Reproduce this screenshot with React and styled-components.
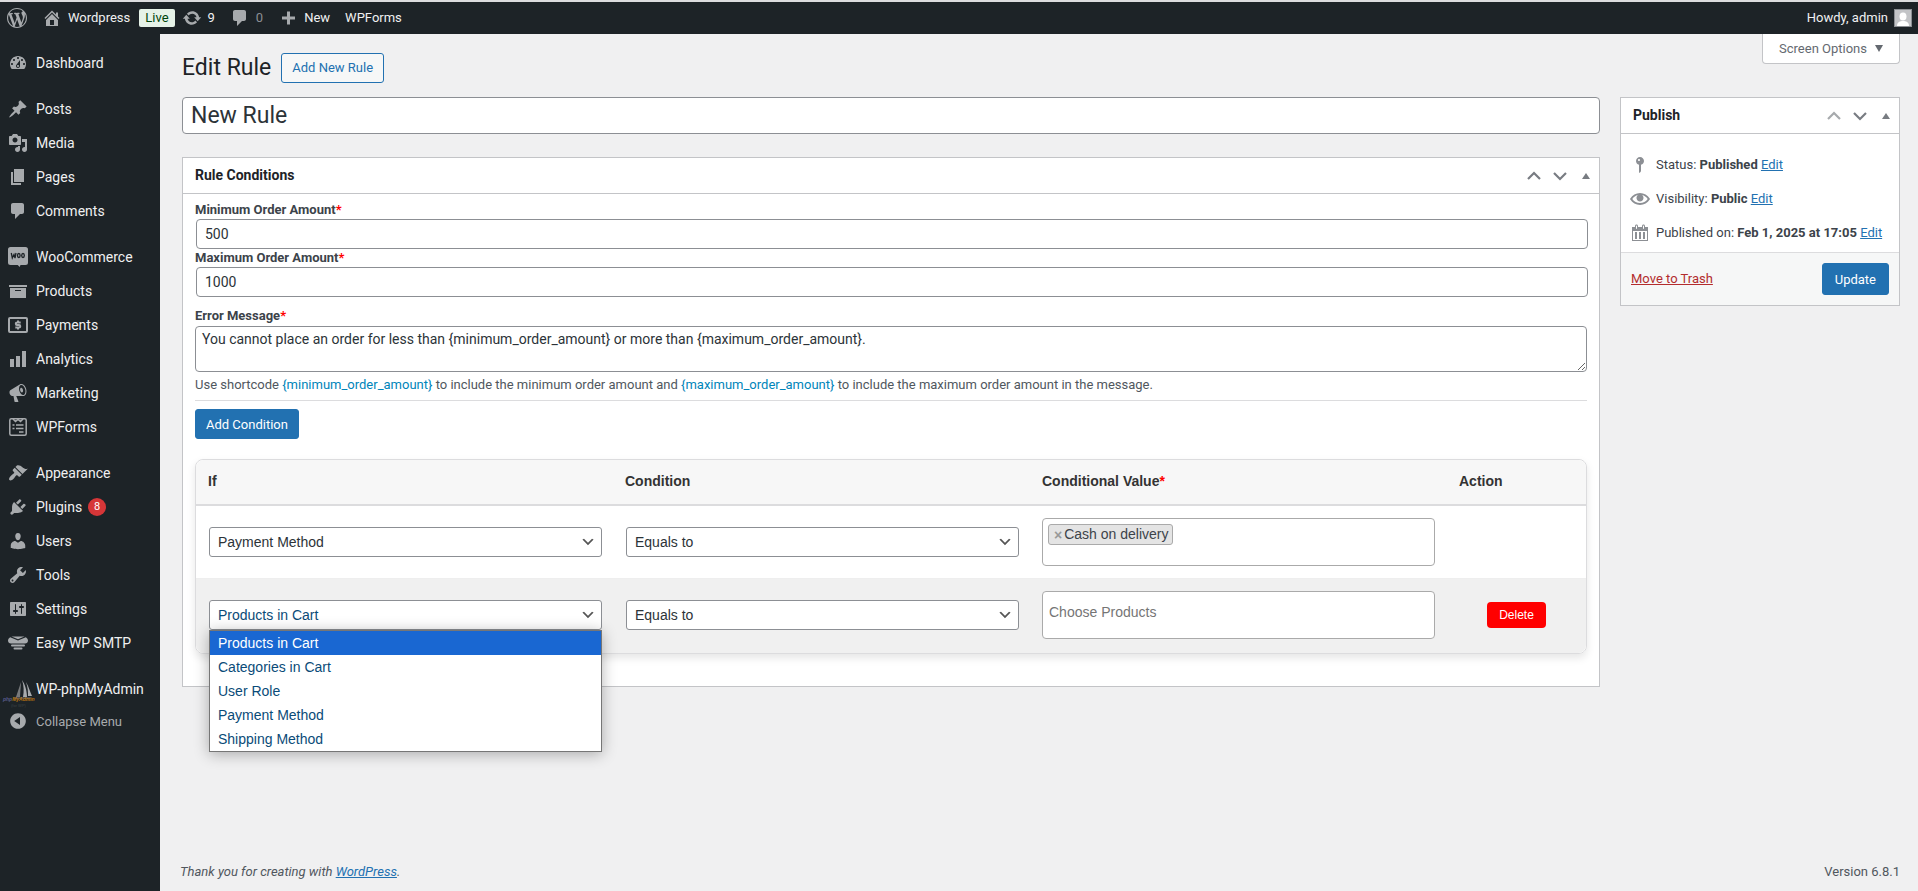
import React, { useState } from "react";
import styled, { createGlobalStyle } from "styled-components";

const icons = {
  wordpress:
    "M20 10c0-5.51-4.49-10-10-10C4.48 0 0 4.49 0 10c0 5.52 4.48 10 10 10 5.51 0 10-4.48 10-10zM7.78 15.37L4.37 6.22c.55-.02 1.17-.08 1.17-.08.5-.06.44-1.13-.06-1.11 0 0-1.45.11-2.37.11-.18 0-.37 0-.58-.01C4.12 2.69 6.87 1.11 10 1.11c2.33 0 4.45.87 6.05 2.34-.68-.11-1.65.39-1.65 1.58 0 .74.45 1.36.9 2.1.35.61.55 1.36.55 2.46 0 1.49-1.4 5-1.4 5l-3.03-8.37c.54-.02.82-.17.82-.17.5-.05.44-1.25-.06-1.22 0 0-1.44.12-2.38.12-.87 0-2.33-.12-2.33-.12-.5-.03-.56 1.2-.06 1.22l.92.08 1.26 3.41zM17.41 10c.24-.64.74-1.87.43-4.25.7 1.29 1.05 2.71 1.05 4.25 0 3.29-1.73 6.24-4.4 7.78.97-2.59 1.94-5.2 2.92-7.78zM6.1 18.09C3.12 16.65 1.11 13.53 1.11 10c0-1.3.23-2.48.72-3.59C3.25 10.3 4.67 14.2 6.1 18.09zm4.03-6.63l2.58 6.98c-.86.29-1.76.45-2.71.45-.79 0-1.57-.11-2.29-.33.81-2.38 1.62-4.74 2.42-7.1z",
  home: "M16 8.5l1.53 1.53-1.06 1.06L10 4.6l-6.47 6.49-1.06-1.06L10 2.5l4 4v-2h2v4zm-6-2.46l6 5.99V18H4v-5.97zM12 17v-5H8v5h4z",
  update:
    "M10.2 3.28c3.53 0 6.43 2.61 6.92 6h2.08l-3.5 4-3.5-4h2.32c-.45-1.97-2.21-3.45-4.32-3.45-1.45 0-2.73.71-3.54 1.78L4.95 5.66C6.23 4.2 8.11 3.28 10.2 3.28zm-.4 13.44c-3.52 0-6.43-2.61-6.92-6H.8l3.5-4c1.17 1.33 2.33 2.67 3.5 4H5.48c.45 1.97 2.21 3.45 4.32 3.45 1.45 0 2.73-.71 3.54-1.78l1.71 1.95c-1.28 1.46-3.15 2.38-5.25 2.38z",
  comments:
    "M5 2h9c1.1 0 2 .9 2 2v7c0 1.1-.9 2-2 2h-2l-5 5v-5H5c-1.1 0-2-.9-2-2V4c0-1.1.9-2 2-2z",
  plus: "M17 8.5v3h-5v5H9v-5H4v-3h5v-5h3v5h5z",
  dashboard:
    "M3.76 16h12.48c1.1-1.37 1.76-3.11 1.76-5 0-4.42-3.58-8-8-8s-8 3.58-8 8c0 1.89.66 3.63 1.76 5zM10 4c.55 0 1 .45 1 1s-.45 1-1 1-1-.45-1-1 .45-1 1-1zM6 6c.55 0 1 .45 1 1s-.45 1-1 1-1-.45-1-1 .45-1 1-1zm8 0c.55 0 1 .45 1 1s-.45 1-1 1-1-.45-1-1 .45-1 1-1zm-5.37 5.55L12 7v6c0 1.1-.9 2-2 2s-2-.9-2-2c0-.57.24-1.08.63-1.45zM4 10c.55 0 1 .45 1 1s-.45 1-1 1-1-.45-1-1 .45-1 1-1zm12 0c.55 0 1 .45 1 1s-.45 1-1 1-1-.45-1-1 .45-1 1-1zm-5 3c0-.55-.45-1-1-1s-1 .45-1 1 .45 1 1 1 1-.45 1-1z",
  posts:
    "M10.44 3.02l1.82-1.82 6.36 6.35-1.83 1.82c-1.05-.68-2.48-.57-3.41.36l-.75.75c-.92.93-1.04 2.35-.35 3.41l-1.83 1.82-2.41-2.41-2.8 2.79c-.42.42-3.38 2.71-3.8 2.29s1.86-3.39 2.28-3.81l2.79-2.79L4.1 9.36l1.83-1.82c1.05.69 2.48.57 3.4-.36l.75-.75c.93-.92 1.05-2.35.36-3.41z",
  media:
    "M13 11V4c0-.55-.45-1-1-1h-1.67L9 1H5L3.67 3H2c-.55 0-1 .45-1 1v7c0 .55.45 1 1 1h10c.55 0 1-.45 1-1zM7 4.5c1.38 0 2.5 1.12 2.5 2.5S8.38 9.5 7 9.5 4.5 8.38 4.5 7 5.62 4.5 7 4.5zM14 6h5v10.5c0 1.38-1.12 2.5-2.5 2.5S14 17.88 14 16.5s1.12-2.5 2.5-2.5c.17 0 .34.02.5.05V9h-3V6zm-4 8.05V13h2v3.5c0 1.38-1.12 2.5-2.5 2.5S7 17.88 7 16.5 8.12 14 9.5 14c.17 0 .34.02.5.05z",
  pages: "M6 15V2h10v13H6zm-1 1h8v2H3V5h2v11z",
  products: "M19 4v2H1V4h18zM2 7h16v10H2V7zm11 3V9H7v1h6z",
  analytics: "M18 18V2h-4v16h4zm-6 0V7H8v11h4zm-6 0v-8H2v8h4z",
  marketing:
    "M18.15 5.94c.46 1.62.38 3.22-.02 4.48-.42 1.28-1.26 2.18-2.3 2.48-.16.06-.26.06-.4.06-.06.02-.12.02-.18.02-.06.02-.14.02-.22.02h-6.8l2.22 5.5c.02.14-.06.26-.14.34-.08.1-.24.16-.34.16H6.95c-.1 0-.26-.06-.34-.16-.08-.08-.16-.2-.14-.34l-1-5.5H4.25l-.02-.02c-.5.06-1.08-.18-1.54-.62s-.88-1.08-1.06-1.88c-.24-.8-.2-1.56-.02-2.2.18-.62.58-1.08 1.06-1.3l.02-.02 9-5.4c.1-.06.18-.1.24-.16.06-.04.14-.08.24-.12.16-.08.28-.12.5-.18 1.04-.3 2.24.1 3.22.98s1.84 2.24 2.26 3.86zm-2.58 5.98h-.02c.4-.1.74-.34 1.04-.7.58-.7.86-1.76.86-3.04 0-.64-.1-1.3-.28-1.98-.34-1.36-1.02-2.5-1.78-3.24s-1.68-1.1-2.46-.88c-.82.22-1.4.96-1.7 2-.32 1.04-.28 2.36.06 3.72.38 1.36 1 2.5 1.8 3.24.78.74 1.62 1.1 2.48.88zm-2.54-7.08c.22-.04.42-.02.62.04.38.16.76.48 1.02 1s.42 1.2.42 1.78c0 .3-.04.56-.12.8-.18.48-.44.84-.86.94-.34.1-.8-.06-1.14-.4s-.64-.86-.78-1.5c-.18-.62-.12-1.24.02-1.72s.48-.84.82-.94z",
  appearance:
    "M14.48 11.06L7.41 3.99l1.5-1.5c.5-.56 2.3-.47 3.51.32 1.21.8 1.43 1.28 2.91 2.1 1.18.64 2.45 1.26 4.45.85zm-.71.71L6.7 4.7 4.93 6.47c-.39.39-.39 1.02 0 1.41l1.06 1.06c.39.39.39 1.03 0 1.42-.6.6-1.43 1.11-2.21 1.69-.35.26-.7.53-1.01.84C1.43 14.23.4 16.08 1.4 17.07c.99 1 2.84-.03 4.18-1.36.31-.31.58-.66.85-1.02.57-.78 1.08-1.61 1.69-2.21.39-.39 1.02-.39 1.41 0l1.06 1.06c.39.39 1.02.39 1.41 0z",
  plugins:
    "M13.11 4.36L9.87 7.6 8 5.73l3.24-3.24c.35-.34 1.05-.2 1.56.32.52.51.66 1.21.31 1.55zm-8 1.77l.91-1.12 9.01 9.01-1.19.84c-.71.71-2.63 1.16-3.82 1.16H6.14L4.9 17.26c-.59.59-1.54.59-2.12 0-.59-.58-.59-1.53 0-2.12l1.24-1.24v-3.88c0-1.13.4-3.19 1.09-3.89zm7.26 3.97l3.24-3.24c.34-.35 1.04-.21 1.55.31.52.51.66 1.21.31 1.55l-3.24 3.25z",
  users:
    "M10 9.25c-2.27 0-2.73-3.44-2.73-3.44C7 4.02 7.82 2 9.97 2c2.16 0 2.98 2.02 2.71 3.81 0 0-.41 3.44-2.68 3.44zm0 2.57L12.72 10c2.39 0 4.52 2.33 4.52 4.53v2.49s-3.65 1.13-7.24 1.13c-3.65 0-7.24-1.13-7.24-1.13v-2.49c0-2.25 1.94-4.48 4.47-4.48z",
  tools:
    "M16.68 9.77c-1.34 1.34-3.3 1.67-4.95.99l-5.41 6.52c-.99.99-2.59.99-3.58 0s-.99-2.59 0-3.57l6.52-5.42c-.68-1.65-.35-3.61.99-4.95 1.28-1.28 3.12-1.62 4.72-1.06l-2.89 2.89 2.82 2.82 2.86-2.87c.53 1.58.18 3.39-1.08 4.65zM3.81 16.21c.4.39 1.04.39 1.43 0 .4-.4.4-1.04 0-1.43-.39-.4-1.03-.4-1.43 0-.39.39-.39 1.03 0 1.43z",
  settings:
    "M18 16V4c0-.6-.4-1-1-1H3c-.6 0-1 .4-1 1v12c0 .6.4 1 1 1h14c.6 0 1-.4 1-1zM8 11h1c.55 0 1 .45 1 1s-.45 1-1 1H8v1.5c0 .28-.22.5-.5.5s-.5-.22-.5-.5V13H6c-.55 0-1-.45-1-1s.45-1 1-1h1V5.5c0-.28.22-.5.5-.5s.5.22.5.5V11zm5-2h-1c-.55 0-1-.45-1-1s.45-1 1-1h1V5.500c0-.28.22-.5.5-.5s.5.22.5.5V7h1c.55 0 1 .45 1 1s-.45 1-1 1h-1v5.500c0 .28-.22.5-.5.5s-.5-.22-.5-.5V9z",
  collapse:
    "M10 2.16c4.33 0 7.84 3.51 7.84 7.84s-3.51 7.84-7.84 7.84S2.16 14.33 2.16 10 5.71 2.16 10 2.16zm2 11.72V6.12L6.18 9.97z",
  visibility:
    "M19.7 9.4C17.7 6 14 3.9 10 3.9S2.3 6 .3 9.4L0 10l.3.6c2 3.4 5.7 5.5 9.7 5.5s7.7-2.1 9.7-5.5l.3-.6-.3-.6zM10 14.1c-3.1 0-6-1.6-7.7-4.1C3.6 8 5.7 6.6 8 6.1c-.9.6-1.5 1.7-1.5 2.9 0 1.9 1.6 3.5 3.5 3.5s3.5-1.6 3.5-3.5c0-1.2-.6-2.3-1.5-2.9 2.3.5 4.4 1.9 5.7 3.9-1.7 2.5-4.6 4.1-7.7 4.1z",
  status:
    "M14 6c0 1.86-1.28 3.41-3 3.86V16c0 1-2 2-2 2V9.86c-1.72-.45-3-2-3-3.86 0-2.21 1.79-4 4-4s4 1.79 4 4zM8 5c0 .55.45 1 1 1s1-.45 1-1-.45-1-1-1-1 .45-1 1z",
  calendar:
    "M15 4h3v14H2V4h3V3c0-.83.67-1.5 1.5-1.5S8 2.17 8 3v1h4V3c0-.83.67-1.5 1.5-1.5S15 2.17 15 3v1zM6 3v2.5c0 .28.22.5.5.5s.5-.22.5-.5V3c0-.28-.22-.5-.5-.5S6 2.72 6 3zm7 0v2.5c0 .28.22.5.5.5s.5-.22.5-.5V3c0-.28-.22-.5-.5-.5s-.5.22-.5.5zm4 14V8H3v9h14zM7 16V9H5v7h2zm4 0V9H9v7h2zm4 0V9h-2v7h2z",
};

function Icon({ name, size = 20 }) {
  return (
    <svg width={size} height={size} viewBox="0 0 20 20" fill="currentColor" fillRule="evenodd" aria-hidden="true">
      <path d={icons[name]} />
    </svg>
  );
}

const WooIcon = () => (
  <svg width="20" height="20" viewBox="0 0 20 20" aria-hidden="true">
    <path fill="currentColor" d="M2.5 0h15A2.5 2.5 0 0 1 20 2.500v13a2.500 2.500 0 0 1-2.500 2.500h-5l-.8 2-2-2H2.500A2.500 2.500 0 0 1 0 15.500v-13A2.500 2.500 0 0 1 2.500 0z" />
    <g fill="none" stroke="#1d2327" strokeWidth="1.300">
      <path d="M3.300 6l1 5L6 7.500l1 3.500L8 6" />
      <ellipse cx="10.800" cy="8.500" rx="1.300" ry="2" />
      <ellipse cx="15" cy="8.500" rx="1.300" ry="2" />
    </g>
  </svg>
);

const PaymentsIcon = () => (
  <svg width="20" height="20" viewBox="0 0 20 20" fill="none" stroke="currentColor" strokeWidth="2" aria-hidden="true">
    <rect x="1" y="3" width="18" height="14" rx="1" />
    <path d="M12.700 7.500H9c-1.600 0-1.600 2.500 0 2.500h2c1.700 0 1.700 2.500 0 2.500H7.300M10 5.500v2M10 12.500v2" />
  </svg>
);

const WPFormsIcon = () => (
  <svg width="20" height="20" viewBox="0 0 20 20" fill="none" stroke="currentColor" strokeWidth="1.500" aria-hidden="true">
    <rect x="1.800" y="1.800" width="16.400" height="16.400" rx="1.500" />
    <path d="M5 2l2.500 2.500L10 2.500l2.500 2L15 2M4.500 8h2M8 8h7.500M4.500 11.500h2M8 11.500h7.500M11 15h4.500" />
  </svg>
);

const SmtpIcon = () => (
  <svg width="20" height="20" viewBox="0 0 20 20" fill="currentColor" aria-hidden="true">
    <path d="M3.500 3.500h13L10 6.200z" />
    <path d="M2.200 4.200L10 7.600l7.800-3.400C19.200 5 20 6.300 20 7.500c0 1.700-1.300 3-3 3H3c-1.700 0-3-1.300-3-3 0-1.200.8-2.500 2.200-3.300z" />
    <rect x="3" y="11.500" width="14" height="2" rx="1" />
    <rect x="5.500" y="14.500" width="9" height="2" rx="1" />
  </svg>
);

// the plugin's own logo fills the whole icon column
const PhpMyAdminIcon = () => (
  <svg width="36" height="42" viewBox="0 0 36 42" aria-hidden="true">
    <path fill="#77797b" d="M21 14l-5 15h4z" />
    <path fill="#a7aaad" d="M22 12c2 6 2 11 1 17h4c0-6-2-13-5-17zM26 14c3 5 4 10 6 14h-4c0-4 0-8-2-14z" />
    <path stroke="#77797b" d="M14 30h17" />
    <g fontFamily="Liberation Sans">
      <text x="3" y="33" fontStyle="italic" fontWeight="bold" fontSize="5">
        <tspan fill="#595b8c">php</tspan>
        <tspan fill="#b87412">MyAdmin</tspan>
      </text>
      <text x="11" y="39" fontSize="4" fill="#3c4146">
        (for WP)
      </text>
    </g>
  </svg>
);

const menu = [
  [{ label: "Dashboard", icon: <Icon name="dashboard" /> }],
  [
    { label: "Posts", icon: <Icon name="posts" /> },
    { label: "Media", icon: <Icon name="media" /> },
    { label: "Pages", icon: <Icon name="pages" /> },
    { label: "Comments", icon: <Icon name="comments" /> },
  ],
  [
    { label: "WooCommerce", icon: <WooIcon /> },
    { label: "Products", icon: <Icon name="products" /> },
    { label: "Payments", icon: <PaymentsIcon /> },
    { label: "Analytics", icon: <Icon name="analytics" /> },
    { label: "Marketing", icon: <Icon name="marketing" /> },
    { label: "WPForms", icon: <WPFormsIcon /> },
  ],
  [
    { label: "Appearance", icon: <Icon name="appearance" /> },
    { label: "Plugins", icon: <Icon name="plugins" />, count: 8 },
    { label: "Users", icon: <Icon name="users" /> },
    { label: "Tools", icon: <Icon name="tools" /> },
    { label: "Settings", icon: <Icon name="settings" /> },
    { label: "Easy WP SMTP", icon: <SmtpIcon /> },
  ],
  [{ label: "WP-phpMyAdmin", icon: <PhpMyAdminIcon /> }],
];

const ruleTypes = ["Products in Cart", "Categories in Cart", "User Role", "Payment Method", "Shipping Method"];

function BoxHandles({ name, first }) {
  return (
    <Handles>
      <HandleButton type="button" aria-label={`Move ${name} up`} $dim={first}>
        <svg width="14" height="10" viewBox="0 0 14 10" fill="none" stroke="currentColor" strokeWidth="2.200">
          <path d="M1 8l6-6 6 6" />
        </svg>
      </HandleButton>
      <HandleButton type="button" aria-label={`Move ${name} down`}>
        <svg width="14" height="10" viewBox="0 0 14 10" fill="none" stroke="currentColor" strokeWidth="2.200">
          <path d="M1 2l6 6 6-6" />
        </svg>
      </HandleButton>
      <HandleButton type="button" aria-label={`Toggle ${name}`}>
        <svg width="8" height="6" viewBox="0 0 8 6" fill="currentColor">
          <path d="M4 0l4 6H0z" />
        </svg>
      </HandleButton>
    </Handles>
  );
}

function App() {
  const [title, setTitle] = useState("New Rule");
  const [min, setMin] = useState("500");
  const [max, setMax] = useState("1000");
  const [message, setMessage] = useState(
    "You cannot place an order for less than {minimum_order_amount} or more than {maximum_order_amount}."
  );
  const [type, setType] = useState("Products in Cart");

  return (
    <>
      <GlobalStyle />
      <Page>
        <AdminBar>
          <BarLink href="#" aria-label="About WordPress">
            <Icon name="wordpress" />
          </BarLink>
          <BarLink href="#">
            <Icon name="home" />
            Wordpress
          </BarLink>
          <LiveBadge href="#">Live</LiveBadge>
          <BarLink href="#">
            <Icon name="update" />
            9
          </BarLink>
          <BarLink href="#" $muted>
            <Icon name="comments" />
            0
          </BarLink>
          <BarLink href="#">
            <Icon name="plus" />
            New
          </BarLink>
          <BarLink href="#">WPForms</BarLink>
          <Account href="#">
            Howdy, admin
            <Avatar>
              <svg width="16" height="16" viewBox="0 0 16 16" fill="#fff">
                <ellipse cx="8" cy="6.500" rx="3.500" ry="4" />
                <path d="M2 16c0-4 3-5 6-5s6 1 6 5z" />
              </svg>
            </Avatar>
          </Account>
        </AdminBar>

        <Columns>
          <Sidebar>
            {menu.map((group, i) => (
              <MenuGroup key={i}>
                {group.map((item) => (
                  <li key={item.label}>
                    <MenuLink href="#">
                      <MenuIcon>{item.icon}</MenuIcon>
                      {item.label}
                      {item.count && <Count>{item.count}</Count>}
                    </MenuLink>
                  </li>
                ))}
              </MenuGroup>
            ))}
            <Collapse type="button">
              <MenuIcon>
                <Icon name="collapse" />
              </MenuIcon>
              Collapse Menu
            </Collapse>
          </Sidebar>

          <Main>
            <TopRow>
              <Heading>
                <h1>Edit Rule</h1>
                <OutlineLink href="#">Add New Rule</OutlineLink>
              </Heading>
              <ScreenOptions type="button">
                Screen Options
                <svg width="8" height="7" viewBox="0 0 8 7" fill="currentColor">
                  <path d="M0 0h8L4 7z" />
                </svg>
              </ScreenOptions>
            </TopRow>

            <Content>
              <div>
                <TitleInput aria-label="Rule title" value={title} onChange={(e) => setTitle(e.target.value)} />
                <Box>
                  <BoxHeader>
                    <h2>Rule Conditions</h2>
                    <BoxHandles name="Rule Conditions" />
                  </BoxHeader>
                  <BoxBody>
                    <Label htmlFor="min">
                      Minimum Order Amount<Star>*</Star>
                    </Label>
                    <Input id="min" value={min} onChange={(e) => setMin(e.target.value)} />
                    <Label htmlFor="max">
                      Maximum Order Amount<Star>*</Star>
                    </Label>
                    <Input id="max" value={max} onChange={(e) => setMax(e.target.value)} />
                    <MessageField>
                      <Label htmlFor="message">
                        Error Message<Star>*</Star>
                      </Label>
                      <Textarea id="message" value={message} onChange={(e) => setMessage(e.target.value)} />
                      <Hint>
                        Use shortcode <code>{"{minimum_order_amount}"}</code> to include the minimum order amount and{" "}
                        <code>{"{maximum_order_amount}"}</code> to include the maximum order amount in the message.
                      </Hint>
                    </MessageField>
                    <PrimaryButton type="button">Add Condition</PrimaryButton>

                    <TableCard>
                      <Table>
                        <colgroup>
                          <col width="30%" />
                          <col width="30%" />
                          <col width="30%" />
                          <col width="10%" />
                        </colgroup>
                        <thead>
                          <tr>
                            <th>If</th>
                            <th>Condition</th>
                            <th>
                              Conditional Value<Star>*</Star>
                            </th>
                            <th>Action</th>
                          </tr>
                        </thead>
                        <tbody>
                          <tr>
                            <td>
                              <Select aria-label="If" defaultValue="Payment Method">
                                {ruleTypes.map((t) => (
                                  <option key={t}>{t}</option>
                                ))}
                              </Select>
                            </td>
                            <td>
                              <Select aria-label="Condition">
                                <option>Equals to</option>
                              </Select>
                            </td>
                            <td>
                              <TagBox>
                                <Tag>
                                  <button type="button" aria-label="Remove Cash on delivery">
                                    ×
                                  </button>
                                  Cash on delivery
                                </Tag>
                              </TagBox>
                            </td>
                            <td />
                          </tr>
                          <tr>
                            <td>
                              <Dropdown>
                                <Select aria-label="If" $active value={type} onChange={(e) => setType(e.target.value)}>
                                  {ruleTypes.map((t) => (
                                    <option key={t}>{t}</option>
                                  ))}
                                </Select>
                                <Options role="listbox">
                                  {ruleTypes.map((t) => (
                                    <Option
                                      key={t}
                                      role="option"
                                      aria-selected={t === type}
                                      $selected={t === type}
                                      onClick={() => setType(t)}
                                    >
                                      {t}
                                    </Option>
                                  ))}
                                </Options>
                              </Dropdown>
                            </td>
                            <td>
                              <Select aria-label="Condition">
                                <option>Equals to</option>
                              </Select>
                            </td>
                            <td>
                              <TagBox>
                                <TagInput aria-label="Products" placeholder="Choose Products" />
                              </TagBox>
                            </td>
                            <td>
                              <DeleteButton type="button">Delete</DeleteButton>
                            </td>
                          </tr>
                        </tbody>
                      </Table>
                    </TableCard>
                  </BoxBody>
                </Box>
              </div>

              <Box as="aside">
                <BoxHeader>
                  <h2>Publish</h2>
                  <BoxHandles name="Publish" first />
                </BoxHeader>
                <PublishInfo>
                  <li>
                    <Icon name="status" />
                    <span>
                      Status: <b>Published</b> <a href="#">Edit</a>
                    </span>
                  </li>
                  <li>
                    <Icon name="visibility" />
                    <span>
                      Visibility: <b>Public</b> <a href="#">Edit</a>
                    </span>
                  </li>
                  <li>
                    <Icon name="calendar" />
                    <span>
                      Published on: <b>Feb 1, 2025 at 17:05</b> <a href="#">Edit</a>
                    </span>
                  </li>
                </PublishInfo>
                <PublishActions>
                  <TrashLink href="#">Move to Trash</TrashLink>
                  <PrimaryButton type="button" $tall>
                    Update
                  </PrimaryButton>
                </PublishActions>
              </Box>
            </Content>

            <Footer>
              <em>
                Thank you for creating with <a href="#">WordPress</a>.
              </em>
              <span>Version 6.8.1</span>
            </Footer>
          </Main>
        </Columns>
      </Page>
    </>
  );
}

const GlobalStyle = createGlobalStyle`
  * {
    box-sizing: border-box;
  }
  body {
    margin: 0;
    background: #f0f0f1;
    color: #3c434a;
    font-family: Roboto, "Open Sans", sans-serif;
    font-size: 13px;
    line-height: 18px;
  }
  button, input, textarea {
    font-family: inherit;
  }
  a {
    color: #2271b1;
  }
  h1, h2, ul {
    margin: 0;
    padding: 0;
  }
  ul {
    list-style: none;
  }
  svg {
    flex: none;
  }
`;

const Page = styled.div`
  display: flex;
  flex-direction: column;
  min-height: 100vh;
  border-top: 2px solid #dcdcde;
`;

const AdminBar = styled.header`
  display: flex;
  align-items: center;
  height: 32px;
  padding: 0 6px 0 7px;
  background: #1d2327;
`;

const BarLink = styled.a`
  display: flex;
  align-items: center;
  gap: 6px;
  margin-right: 15px;
  color: ${(p) => (p.$muted ? "#8c8f94" : "#f0f0f1")};
  text-decoration: none;
  svg {
    color: #a7aaad;
  }
`;

const LiveBadge = styled.a`
  margin: 0 7px 0 -6px;
  padding: 0 6px;
  border-radius: 2px;
  background: #e6f2e8;
  color: #00450c;
  font-size: 13px;
  text-decoration: none;
`;

const Account = styled(BarLink)`
  margin: 0 0 0 auto;
`;

const Avatar = styled.span`
  display: flex;
  border: 1px solid #8c8f94;
  background: #c3c4c7;
`;

const Columns = styled.div`
  display: flex;
  flex: 1;
`;

const Sidebar = styled.nav`
  flex: none;
  width: 160px;
  padding-top: 12px;
  background: #1d2327;
`;

const MenuGroup = styled.ul`
  margin-bottom: 12px;
  &:last-of-type {
    margin-bottom: 0;
  }
`;

const MenuLink = styled.a`
  display: flex;
  align-items: center;
  height: 34px;
  color: #f0f0f1;
  font-size: 14px;
  text-decoration: none;
  white-space: nowrap;
`;

const MenuIcon = styled.span`
  display: flex;
  justify-content: center;
  width: 36px;
  color: #a7aaad;
`;

const Count = styled.span`
  width: 18px;
  height: 18px;
  margin-left: 6px;
  border-radius: 9px;
  background: #d63638;
  color: #fff;
  font-size: 11px;
  text-align: center;
`;

const Collapse = styled.button`
  display: flex;
  align-items: center;
  height: 30px;
  padding: 0;
  border: 0;
  background: none;
  color: #a7aaad;
  font-size: 13px;
`;

const Main = styled.main`
  display: flex;
  flex: 1;
  flex-direction: column;
  min-width: 0;
  padding: 0 18px 10px 22px;
`;

const TopRow = styled.div`
  display: flex;
  align-items: flex-start;
  justify-content: space-between;
`;

const Heading = styled.div`
  display: flex;
  align-items: center;
  gap: 10px;
  padding: 19px 0 14px;
  h1 {
    color: #1d2327;
    font-size: 23px;
    font-weight: 400;
    line-height: 30px;
  }
`;

const OutlineLink = styled.a`
  padding: 0 10px;
  border: 1px solid #2271b1;
  border-radius: 3px;
  background: #f6f7f7;
  line-height: 28px;
  text-decoration: none;
`;

const ScreenOptions = styled.button`
  display: flex;
  align-items: center;
  gap: 8px;
  height: 30px;
  padding: 0 16px;
  border: 1px solid #c3c4c7;
  border-top: 0;
  border-radius: 0 0 4px 4px;
  background: #fff;
  color: #646970;
  font-size: 13px;
`;

const Content = styled.div`
  display: grid;
  grid-template-columns: minmax(0, 1fr) 280px;
  align-items: start;
  gap: 20px;
`;

const TitleInput = styled.input`
  display: block;
  width: 100%;
  height: 37px;
  margin-bottom: 23px;
  padding: 0 8px;
  border: 1px solid #8c8f94;
  border-radius: 4px;
  background: #fff;
  color: #2c3338;
  font-size: 23px;
`;

const Box = styled.section`
  border: 1px solid #c3c4c7;
  background: #fff;
`;

const BoxHeader = styled.div`
  display: flex;
  align-items: center;
  justify-content: space-between;
  height: 36px;
  padding: 0 9px 0 12px;
  border-bottom: 1px solid #c3c4c7;
  h2 {
    padding-bottom: 2px;
    color: #1d2327;
    font-size: 14px;
    font-weight: 700;
  }
`;

const Handles = styled.div`
  display: flex;
  align-items: center;
  gap: 12px;
`;

const HandleButton = styled.button`
  display: flex;
  padding: 0;
  border: 0;
  background: none;
  color: ${(p) => (p.$dim ? "#a7aaad" : "#787c82")};
  &:last-child {
    margin-left: 3px;
  }
`;

const BoxBody = styled.div`
  padding: 7px 12px 32px;
`;

const Label = styled.label`
  display: block;
  font-weight: 700;
`;

const Star = styled.span`
  color: #f00;
`;

const Input = styled.input`
  display: block;
  width: 100%;
  height: 30px;
  margin: 0 1px;
  padding: 0 8px;
  border: 1px solid #8c8f94;
  border-radius: 4px;
  color: #2c3338;
  font-size: 14px;
`;

const MessageField = styled.div`
  margin-bottom: 8px;
  padding: 10px 0 6px;
  border-bottom: 1px solid #dcdcde;
`;

const Textarea = styled.textarea`
  display: block;
  width: 100%;
  height: 46px;
  margin: 1px 0 4px;
  padding: 2px 6px;
  border: 1px solid #8c8f94;
  border-radius: 4px;
  color: #2c3338;
  font-size: 14px;
  line-height: 20px;
`;

const Hint = styled.p`
  margin: 0;
  color: #50575e;
  code {
    color: #0085ba;
    font-family: inherit;
    font-size: 13px;
  }
`;

const PrimaryButton = styled.button`
  height: ${(p) => (p.$tall ? "32px" : "30px")};
  padding: 0 ${(p) => (p.$tall ? "12px" : "10px")};
  border: 1px solid #2271b1;
  border-radius: 3px;
  background: #2271b1;
  color: #fff;
  font-size: 13px;
`;

const TableCard = styled.div`
  margin-top: 20px;
  border: 1px solid #dcdcde;
  border-radius: 8px;
  box-shadow: 0 4px 8px rgba(0, 0, 0, 0.1);
  font-family: "Liberation Sans", Arial, sans-serif;
`;

const Table = styled.table`
  width: 100%;
  border-collapse: separate;
  border-spacing: 0;
  table-layout: fixed;
  font-size: 14px;
  th {
    height: 46px;
    padding: 0 12px 2px;
    border-bottom: 2px solid #dcdcde;
    background: #f7f7f7;
    color: #333;
    text-align: left;
  }
  th:first-child {
    border-top-left-radius: 8px;
  }
  th:last-child {
    border-top-right-radius: 8px;
  }
  td {
    padding: 12px;
    text-align: center;
  }
  tr:nth-child(2) td {
    padding-bottom: 14px;
    border-top: 1px solid #eee;
    background: #f0f0f0;
  }
  td:first-child {
    border-bottom-left-radius: 8px;
  }
  td:last-child {
    border-bottom-right-radius: 8px;
  }
`;

const Select = styled.select`
  display: block;
  width: 100%;
  height: 30px;
  margin: 0 1px;
  padding: 0 24px 0 8px;
  appearance: none;
  border: 1px solid #8c8f94;
  border-radius: 3px;
  background: #fff
    url("data:image/svg+xml,%3Csvg xmlns='http://www.w3.org/2000/svg' viewBox='0 0 20 20'%3E%3Cpath d='M5 6l5 5 5-5 2 1-7 7-7-7 2-1z' fill='%23555'/%3E%3C/svg%3E")
    no-repeat right 5px center / 16px 16px;
  color: ${(p) => (p.$active ? "#0a4b78" : "#2c3338")};
  font-family: inherit;
  font-size: 14px;
`;

const Dropdown = styled.div`
  position: relative;
`;

const Options = styled.ul`
  position: absolute;
  z-index: 2;
  top: 100%;
  left: 0;
  width: 100%;
  margin: 0 1px;
  border: 1px solid #767676;
  background: #fff;
  box-shadow: 0 2px 14px rgba(0, 0, 0, 0.3);
`;

const Option = styled.li`
  height: 24px;
  padding-left: 8px;
  background: ${(p) => (p.$selected ? "#1967d2" : "#fff")};
  color: ${(p) => (p.$selected ? "#fff" : "#0a4b78")};
  line-height: 24px;
  text-align: left;
`;

const TagBox = styled.div`
  display: flex;
  align-items: flex-start;
  height: 48px;
  padding: 5px;
  border: 1px solid #aaa;
  border-radius: 4px;
  background: #fff;
`;

const Tag = styled.span`
  display: flex;
  padding: 0 4px;
  border: 1px solid #aaa;
  border-radius: 3px;
  background: #e4e4e4;
  line-height: 19px;
  button {
    padding: 0 2px 0 1px;
    border: 0;
    background: none;
    color: #999;
    font-size: 14px;
    font-weight: bold;
  }
`;

const TagInput = styled.input`
  width: 100%;
  height: 30px;
  padding: 0 1px;
  border: 0;
  font-family: inherit;
  font-size: 14px;
  &::placeholder {
    color: #757575;
  }
`;

const DeleteButton = styled.button`
  height: 26px;
  padding: 0 12px;
  border: 0;
  border-radius: 4px;
  background: #f00;
  color: #fff;
  font-size: 12px;
`;

const PublishInfo = styled.ul`
  padding: 14px 9px 2px;
  li {
    display: flex;
    align-items: center;
    gap: 6px;
    height: 34px;
    white-space: nowrap;
  }
  svg {
    color: #8c8f94;
  }
`;

const PublishActions = styled.div`
  display: flex;
  align-items: center;
  justify-content: space-between;
  padding: 10px;
  border-top: 1px solid #dcdcde;
  background: #f6f7f7;
`;

const TrashLink = styled.a`
  color: #b32d2e;
`;

const Footer = styled.footer`
  display: flex;
  justify-content: space-between;
  margin: auto 0 0 -2px;
  color: #50575e;
`;

export default App;
